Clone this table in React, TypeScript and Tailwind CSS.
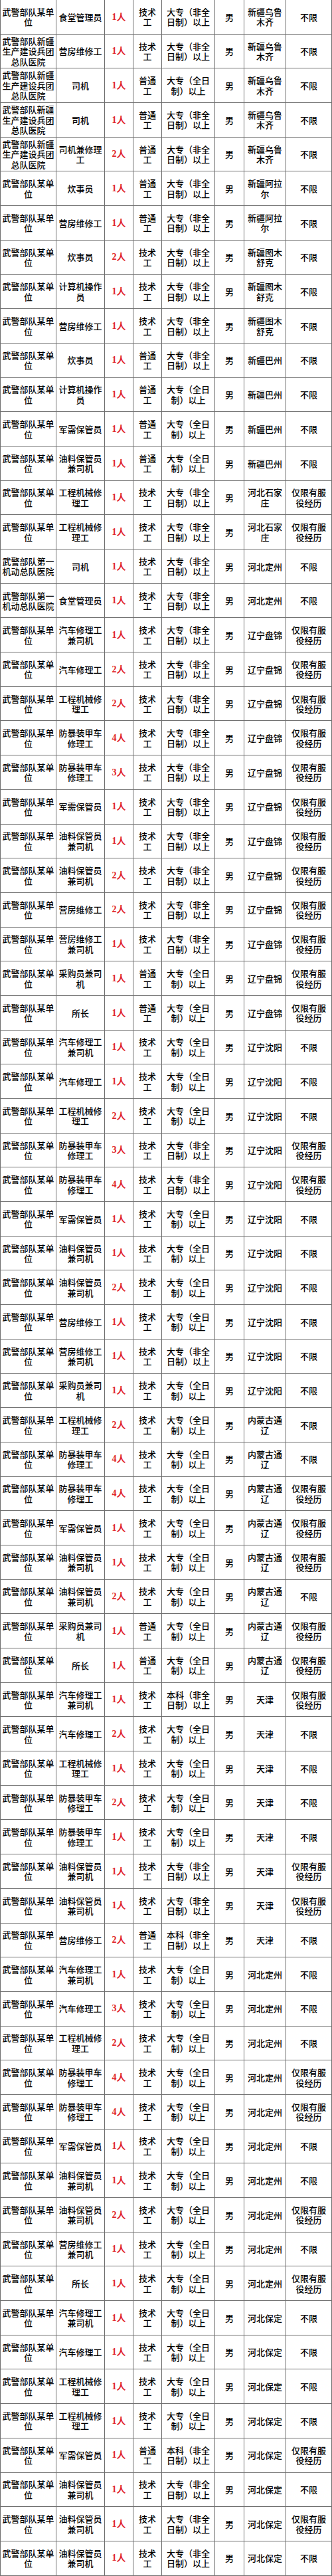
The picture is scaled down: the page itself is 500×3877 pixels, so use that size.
// 招聘岗位表：八列，75 行，行高一致，边框为灰色细线。
const A = "武警部队某单位";
const B = "武警部队新疆生产建设兵团总队医院";
const C = "武警部队第一机动总队医院";
const T = "技术工";
const P = "普通工";
const F = "大专（全日制）以上";
const N = "大专（非全日制）以上";
const U = "本科（非全日制）以上";
const X = "不限";
const Y = "仅限有服役经历";

type Row = [string, string, string, string, string, string, string];

const rows: Row[] = [
  [A, "食堂管理员", "1人", T, N, "新疆乌鲁木齐", X],
  [B, "营房维修工", "1人", T, N, "新疆乌鲁木齐", X],
  [B, "司机", "1人", P, F, "新疆乌鲁木齐", X],
  [B, "司机", "1人", P, N, "新疆乌鲁木齐", X],
  [B, "司机兼修理工", "2人", P, N, "新疆乌鲁木齐", X],
  [A, "炊事员", "1人", P, N, "新疆阿拉尔", X],
  [A, "营房维修工", "1人", P, N, "新疆阿拉尔", X],
  [A, "炊事员", "2人", T, N, "新疆图木舒克", X],
  [A, "计算机操作员", "1人", T, N, "新疆图木舒克", X],
  [A, "营房维修工", "1人", T, N, "新疆图木舒克", X],
  [A, "炊事员", "1人", P, N, "新疆巴州", X],
  [A, "计算机操作员", "1人", P, F, "新疆巴州", X],
  [A, "军需保管员", "1人", P, F, "新疆巴州", X],
  [A, "油料保管员兼司机", "1人", P, F, "新疆巴州", X],
  [A, "工程机械修理工", "1人", T, N, "河北石家庄", Y],
  [A, "工程机械修理工", "1人", T, N, "河北石家庄", Y],
  [C, "司机", "1人", T, N, "河北定州", X],
  [C, "食堂管理员", "1人", T, N, "河北定州", X],
  [A, "汽车修理工兼司机", "1人", T, N, "辽宁盘锦", Y],
  [A, "汽车修理工", "2人", T, N, "辽宁盘锦", Y],
  [A, "工程机械修理工", "2人", T, N, "辽宁盘锦", Y],
  [A, "防暴装甲车修理工", "4人", T, N, "辽宁盘锦", Y],
  [A, "防暴装甲车修理工", "3人", T, N, "辽宁盘锦", Y],
  [A, "军需保管员", "1人", T, N, "辽宁盘锦", Y],
  [A, "油料保管员兼司机", "1人", T, N, "辽宁盘锦", Y],
  [A, "油料保管员兼司机", "2人", T, N, "辽宁盘锦", Y],
  [A, "营房维修工", "2人", T, N, "辽宁盘锦", Y],
  [A, "营房维修工兼司机", "1人", T, N, "辽宁盘锦", Y],
  [A, "采购员兼司机", "1人", P, F, "辽宁盘锦", Y],
  [A, "所长", "1人", P, F, "辽宁盘锦", Y],
  [A, "汽车修理工兼司机", "1人", T, F, "辽宁沈阳", X],
  [A, "汽车修理工", "1人", T, F, "辽宁沈阳", X],
  [A, "工程机械修理工", "2人", T, F, "辽宁沈阳", X],
  [A, "防暴装甲车修理工", "3人", T, N, "辽宁沈阳", Y],
  [A, "防暴装甲车修理工", "4人", T, N, "辽宁沈阳", Y],
  [A, "军需保管员", "1人", T, F, "辽宁沈阳", X],
  [A, "油料保管员兼司机", "1人", T, F, "辽宁沈阳", X],
  [A, "油料保管员兼司机", "2人", T, F, "辽宁沈阳", X],
  [A, "营房维修工", "1人", T, F, "辽宁沈阳", X],
  [A, "营房维修工兼司机", "1人", T, N, "辽宁沈阳", X],
  [A, "采购员兼司机", "1人", T, F, "辽宁沈阳", X],
  [A, "工程机械修理工", "2人", T, F, "内蒙古通辽", X],
  [A, "防暴装甲车修理工", "4人", T, F, "内蒙古通辽", X],
  [A, "防暴装甲车修理工", "4人", T, F, "内蒙古通辽", Y],
  [A, "军需保管员", "1人", T, F, "内蒙古通辽", Y],
  [A, "油料保管员兼司机", "1人", T, F, "内蒙古通辽", Y],
  [A, "油料保管员兼司机", "2人", T, F, "内蒙古通辽", X],
  [A, "采购员兼司机", "1人", P, F, "内蒙古通辽", Y],
  [A, "所长", "1人", P, F, "内蒙古通辽", Y],
  [A, "汽车修理工兼司机", "1人", T, U, "天津", Y],
  [A, "汽车修理工", "2人", T, F, "天津", X],
  [A, "工程机械修理工", "1人", T, F, "天津", X],
  [A, "防暴装甲车修理工", "2人", T, F, "天津", X],
  [A, "防暴装甲车修理工", "1人", T, F, "天津", X],
  [A, "油料保管员兼司机", "1人", T, N, "天津", Y],
  [A, "油料保管员兼司机", "1人", T, N, "天津", Y],
  [A, "营房维修工", "2人", P, U, "天津", X],
  [A, "汽车修理工兼司机", "1人", T, F, "河北定州", X],
  [A, "汽车修理工", "3人", T, F, "河北定州", X],
  [A, "工程机械修理工", "2人", T, F, "河北定州", X],
  [A, "防暴装甲车修理工", "4人", T, F, "河北定州", Y],
  [A, "防暴装甲车修理工", "4人", T, F, "河北定州", Y],
  [A, "军需保管员", "1人", T, F, "河北定州", X],
  [A, "油料保管员兼司机", "1人", T, F, "河北定州", X],
  [A, "油料保管员兼司机", "2人", T, F, "河北定州", Y],
  [A, "营房维修工兼司机", "1人", T, F, "河北定州", X],
  [A, "所长", "1人", T, F, "河北定州", Y],
  [A, "汽车修理工兼司机", "1人", T, F, "河北保定", X],
  [A, "汽车修理工", "1人", T, F, "河北保定", X],
  [A, "工程机械修理工", "1人", T, F, "河北保定", X],
  [A, "工程机械修理工", "1人", T, F, "河北保定", X],
  [A, "军需保管员", "1人", P, U, "河北保定", Y],
  [A, "油料保管员兼司机", "1人", T, N, "河北保定", X],
  [A, "油料保管员兼司机", "1人", T, N, "河北保定", Y],
  [A, "油料保管员兼司机", "1人", T, N, "河北保定", X],
];

const cell =
  "flex items-center justify-center border-r border-[#6e6e6e] text-center break-all";

export default function App() {
  return (
    <main className="w-[500px] bg-white text-[13px] font-medium leading-[15.5px] text-black [font-family:'Noto_Sans_CJK_SC','Noto_Sans',sans-serif]">
      <div className="border-l border-[#6e6e6e]">
        {rows.map((r, i) => (
          <div
            key={i}
            className="grid h-[51.693px] grid-cols-[84px_73px_43px_43px_80px_44px_63px_69px] border-b border-[#6e6e6e]"
          >
            <div className={`${cell} px-[2px]`}>{r[0]}</div>
            <div className={`${cell} px-[2px]`}>{r[1]}</div>
            <div
              className={`${cell} px-[2px] text-[14px] font-bold text-[#e0242b] [font-family:'Liberation_Serif','Noto_Sans_CJK_SC',serif]`}
            >
              {r[2]}
            </div>
            <div className={`${cell} px-[3px]`}>{r[3]}</div>
            <div className={`${cell} px-[2px]`}>{r[4]}</div>
            <div className={`${cell} px-[2px]`}>男</div>
            <div className={`${cell} px-[2px]`}>{r[5]}</div>
            <div className={`${cell} px-[3px]`}>{r[6]}</div>
          </div>
        ))}
      </div>
    </main>
  );
}
